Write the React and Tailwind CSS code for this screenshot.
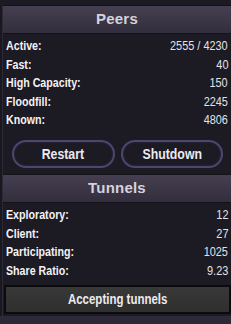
const sans = { fontFamily: '"Liberation Sans", Arial, sans-serif' };

function Row({ label, value }) {
  return (
    <div className="flex h-[18.5px] items-center justify-between pl-[3px] pr-[3px]" style={sans}>
      <span className="inline-block origin-left scale-x-[0.82] whitespace-nowrap text-[13px] font-bold text-[#f4f2f6]">
        {label}
      </span>
      <span className="inline-block origin-right scale-x-[0.84] whitespace-nowrap text-[13px] text-[#e4e2e8]">
        {value}
      </span>
    </div>
  );
}

function Header({ title }) {
  return (
    <div className="flex h-[29px] items-center justify-center border-y border-[#141219] bg-gradient-to-b from-[#453f51] to-[#332e3d]">
      <span className="text-[15px] font-bold tracking-[0.2px] text-[#d6d2dc]" style={sans}>
        {title}
      </span>
    </div>
  );
}

export default function App() {
  const peers = [
    ['Active:', '2555 / 4230'],
    ['Fast:', '40'],
    ['High Capacity:', '150'],
    ['Floodfill:', '2245'],
    ['Known:', '4806'],
  ];
  const tunnels = [
    ['Exploratory:', '12'],
    ['Client:', '27'],
    ['Participating:', '1025'],
    ['Share Ratio:', '9.23'],
  ];

  return (
    <div className="h-[324px] w-[231px] overflow-hidden bg-[#19171f]">
      <div className="h-[5px] bg-[#1c1a22]" />
      <div className="ml-[2px] border-l border-[#2d2a35] bg-[#1c1a22]">
        <Header title="Peers" />
        <div className="pt-[2.75px]">
          {peers.map(([l, v]) => (
            <Row key={l} label={l} value={v} />
          ))}
        </div>
        <div className="flex gap-[6px] pl-[9px] pr-[8px] pt-[10.5px] pb-[6px]">
          {['Restart', 'Shutdown'].map((b) => (
            <button
              key={b}
              className="h-[28px] flex-1 rounded-full border-2 border-[#4d4670] bg-[#1c1a23] shadow-[inset_0_0_3px_#2f2a40]"
              style={sans}
            >
              <span className="inline-block scale-x-[0.82] whitespace-nowrap text-[15px] font-bold text-[#eceaf0]">
                {b}
              </span>
            </button>
          ))}
        </div>
        <Header title="Tunnels" />
        <div className="pt-[2.75px]">
          {tunnels.map(([l, v]) => (
            <Row key={l} label={l} value={v} />
          ))}
        </div>
        <div className="pl-[1px] pt-[5.25px] pb-[2px]">
          <div
            className="flex h-[29px] items-center justify-center border-2 border-[#0b0b0d] bg-gradient-to-b from-[#383838] to-[#2f2f2f]"
            style={sans}
          >
            <span className="inline-block scale-x-[0.82] whitespace-nowrap text-[14px] font-bold text-[#ecebee]">
              Accepting tunnels
            </span>
          </div>
        </div>
      </div>
      <div className="h-[10px] bg-[#2d2939]" />
    </div>
  );
}
